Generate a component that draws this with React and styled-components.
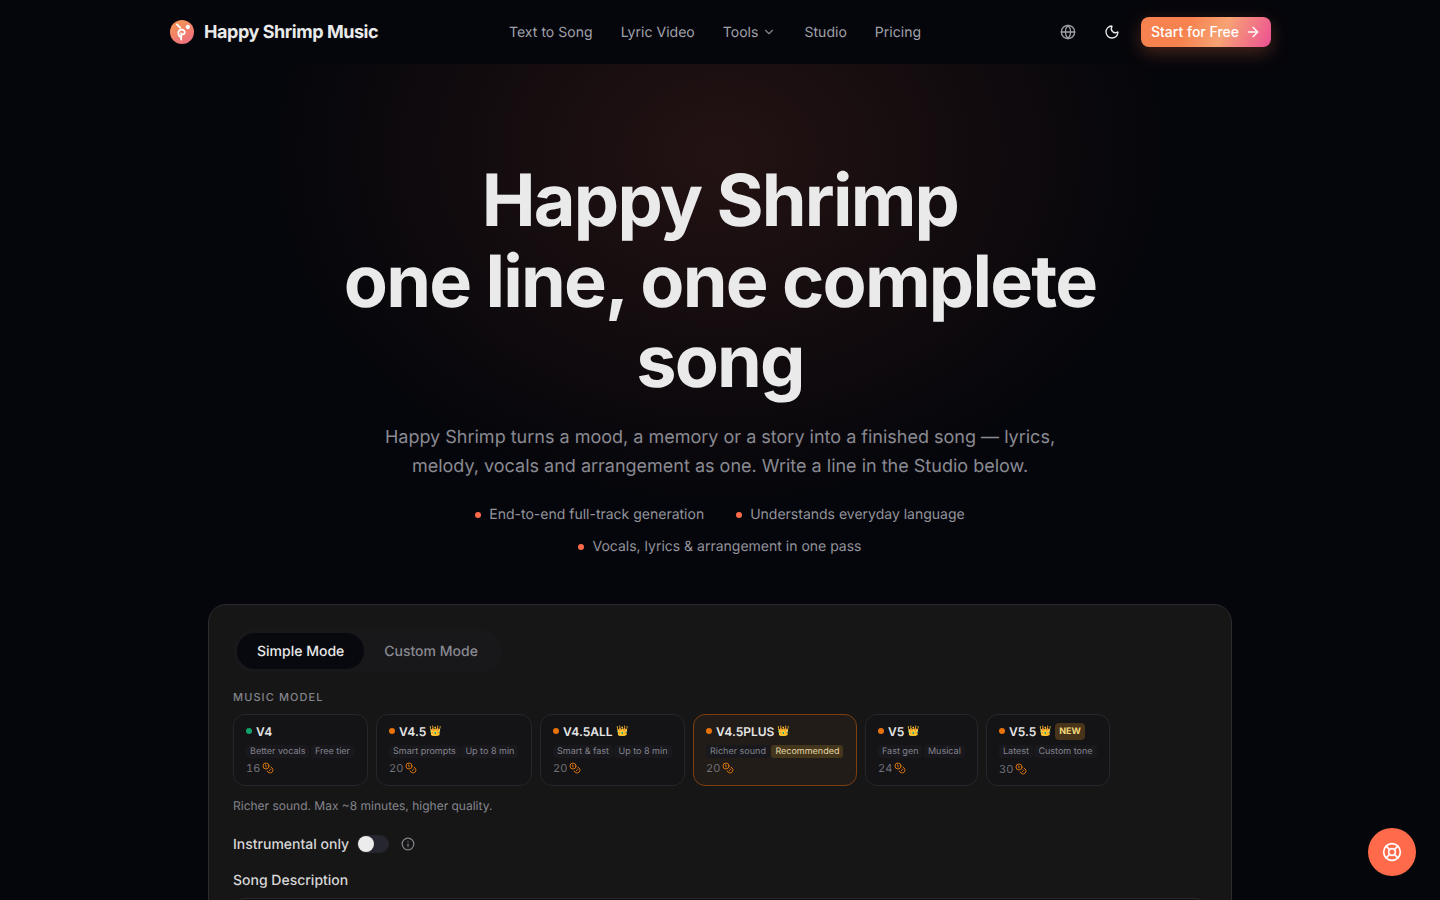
import React from 'react';
import styled, { createGlobalStyle } from 'styled-components';
import { ChevronDown, Globe, Moon, ArrowRight, Info, LifeBuoy, Coins } from 'lucide-react';

const models = [
  { name: 'V4', dot: '#10a36a', tags: ['Better vocals', 'Free tier'], credits: 16, width: 135 },
  { name: 'V4.5', crown: true, tags: ['Smart prompts', 'Up to 8 min'], credits: 20, width: 156 },
  { name: 'V4.5ALL', crown: true, tags: ['Smart & fast', 'Up to 8 min'], credits: 20, width: 145 },
  { name: 'V4.5PLUS', crown: true, tags: ['Richer sound', 'Recommended'], credits: 20, width: 164, active: true },
  { name: 'V5', crown: true, tags: ['Fast gen', 'Musical'], credits: 24, width: 113 },
  { name: 'V5.5', crown: true, isNew: true, tags: ['Latest', 'Custom tone'], credits: 30, width: 124 },
];

const LogoMark = () => (
  <LogoCircle>
    <svg width="20" height="20" viewBox="0 0 24 24" fill="none" stroke="#fff" strokeWidth="2.2" strokeLinecap="round">
      <path d="M6 3l4 4" />
      <path d="M10 18c-3-2-3.5-7 0-8.5 3-1.2 6 1 5.2 3.6-.6 2-3.6 2.4-4.4.6" />
      <path d="M11 16v5" />
      <circle cx="19" cy="6" r="1.5" fill="#fff" />
    </svg>
  </LogoCircle>
);

const App = () => {
  return (
    <Page>
      <GlobalStyle />
      <Header>
        <Brand>
          <LogoMark />
          <BrandName>Happy Shrimp Music</BrandName>
        </Brand>
        <Nav>
          <NavLink>Text to Song</NavLink>
          <NavLink>Lyric Video</NavLink>
          <NavLink>Tools <NavChevron size={14} /></NavLink>
          <NavLink>Studio</NavLink>
          <NavLink>Pricing</NavLink>
        </Nav>
        <Actions>
          <IconButton><Globe size={16} /></IconButton>
          <IconButton $light><Moon size={16} /></IconButton>
          <StartButton>Start for Free <ArrowRight size={16} /></StartButton>
        </Actions>
      </Header>

      <Hero>
        <Title>Happy Shrimp<br />one line, one complete song</Title>
        <Subtitle>
          Happy Shrimp turns a mood, a memory or a story into a finished song — lyrics, melody, vocals and arrangement as one. Write a line in the Studio below.
        </Subtitle>
        <Bullets>
          <Bullet>End-to-end full-track generation</Bullet>
          <Bullet>Understands everyday language</Bullet>
          <Bullet>Vocals, lyrics &amp; arrangement in one pass</Bullet>
        </Bullets>
      </Hero>

      <Studio>
        <Tabs>
          <Tab $active>Simple Mode</Tab>
          <Tab>Custom Mode</Tab>
        </Tabs>
        <SectionLabel>Music Model</SectionLabel>
        <ModelRow>
          {models.map((m) => (
            <ModelCard key={m.name} $active={m.active} $width={m.width}>
              <ModelHead>
                <Dot $color={m.dot} />
                <ModelName>{m.name}</ModelName>
                {m.crown && <CrownGlyph>👑</CrownGlyph>}
                {m.isNew && <NewBadge>NEW</NewBadge>}
              </ModelHead>
              <TagRow>
                {m.tags.map((t) => (
                  <Tag key={t} $gold={t === 'Recommended'}>{t}</Tag>
                ))}
              </TagRow>
              <Credits $low={m.isNew}>{m.credits} <Coins size={12} color="#d9730d" /></Credits>
            </ModelCard>
          ))}
        </ModelRow>
        <Hint>Richer sound. Max ~8 minutes, higher quality.</Hint>
        <ToggleRow>
          <ToggleLabel>Instrumental only</ToggleLabel>
          <Switch><Knob /></Switch>
          <InfoIcon><Info size={14} /></InfoIcon>
        </ToggleRow>
        <FieldLabel>Song Description</FieldLabel>
        <DescriptionBox />
      </Studio>

      <HelpButton><LifeBuoy size={20} /></HelpButton>
    </Page>
  );
};

const GlobalStyle = createGlobalStyle`
  html, body {
    margin: 0;
    height: 100%;
    overflow: hidden;
    background: #05060b;
  }
  * {
    box-sizing: border-box;
  }
`;

const Page = styled.div`
  height: 900px;
  overflow: hidden;
  font-family: Inter, "Liberation Sans", sans-serif;
  text-rendering: geometricPrecision;
  color: #eaeaea;
  background: #05060b;
`;

const Header = styled.header`
  height: 64px;
  width: 1101px;
  margin-left: 170px;
  display: flex;
  justify-content: space-between;
  align-items: center;
`;

const Brand = styled.div`
  display: flex;
  align-items: center;
  gap: 10px;
`;

const LogoCircle = styled.div`
  width: 24px;
  height: 24px;
  border-radius: 50%;
  display: flex;
  align-items: center;
  justify-content: center;
  background: linear-gradient(150deg, #f59a50, #ef6a84);
`;

const BrandName = styled.span`
  font-size: 18px;
  font-weight: 700;
  letter-spacing: -0.45px;
  color: #eaeaea;
`;

const Nav = styled.nav`
  display: flex;
  align-items: center;
  gap: 28px;
`;

const NavLink = styled.a`
  display: flex;
  align-items: center;
  gap: 4px;
  font-size: 14px;
  font-weight: 400;
  letter-spacing: 0.03px;
  color: #a1a1aa;
`;

const NavChevron = styled(ChevronDown)`
  color: #85858d;
`;

const Actions = styled.div`
  display: flex;
  align-items: center;
  gap: 12px;
`;

const IconButton = styled.button`
  width: 32px;
  height: 32px;
  padding: 0;
  background: none;
  border: none;
  display: flex;
  align-items: center;
  justify-content: center;
  color: ${(p) => (p.$light ? '#eaeaea' : '#a1a1aa')};
`;

const StartButton = styled.button`
  margin-left: 1px;
  width: 130px;
  height: 30px;
  padding: 0 0 1px;
  border: none;
  border-radius: 8px;
  display: flex;
  align-items: center;
  justify-content: center;
  gap: 6px;
  font-family: inherit;
  font-size: 14px;
  font-weight: 500;
  color: #fff;
  background: linear-gradient(115deg, #f6824f 0%, #f6824f 35%, #f7a274 62%, #ec4f94 100%);
  box-shadow: 0 6px 18px rgba(246, 120, 70, 0.28);
`;

const Hero = styled.section`
  height: 540px;
  padding-top: 97px;
  display: flex;
  flex-direction: column;
  align-items: center;
  text-align: center;
  background: radial-gradient(ellipse 450px 350px at 50% 90px, rgba(255, 107, 74, 0.12), rgba(255, 107, 74, 0) 100%);
`;

const Title = styled.h1`
  width: 896px;
  margin: 0;
  font-size: 72px;
  line-height: 80.7px;
  font-weight: 700;
  letter-spacing: -1.8px;
  color: #eaeaea;
`;

const Subtitle = styled.p`
  width: 700px;
  margin: 20px 0 0;
  font-size: 18px;
  line-height: 29px;
  color: #8a8a92;
`;

const Bullets = styled.ul`
  width: 560px;
  margin: 23px 0 0;
  padding: 0;
  list-style: none;
  display: flex;
  flex-wrap: wrap;
  justify-content: center;
  column-gap: 32px;
  row-gap: 11px;
`;

const Bullet = styled.li`
  display: flex;
  align-items: center;
  gap: 8px;
  font-size: 14px;
  line-height: 21px;
  color: #93939b;
  &::before {
    content: '';
    width: 6px;
    height: 6px;
    border-radius: 50%;
    background: #ff6b4a;
  }
`;

const Studio = styled.section`
  width: 1024px;
  height: 400px;
  margin: 0 auto;
  padding: 24px;
  border: 1px solid #2a2a30;
  border-radius: 18px;
  background: #161616;
`;

const Tabs = styled.div`
  display: inline-flex;
  padding: 4px;
  border-radius: 22px;
  background: #18181a;
`;

const Tab = styled.div`
  height: 36px;
  padding: 0 20px;
  display: flex;
  align-items: center;
  border-radius: 18px;
  font-size: 14px;
  font-weight: 500;
  color: ${(p) => (p.$active ? '#eaeaea' : '#8a8a92')};
  background: ${(p) => (p.$active ? '#08090e' : 'none')};
`;

const SectionLabel = styled.div`
  margin-top: 16px;
  height: 16px;
  font-size: 11px;
  line-height: 16px;
  font-weight: 500;
  letter-spacing: 1.1px;
  text-transform: uppercase;
  color: #85858d;
`;

const ModelRow = styled.div`
  display: flex;
  gap: 8px;
  margin-top: 9px;
`;

const ModelCard = styled.div`
  width: ${(p) => p.$width}px;
  height: 72px;
  padding: 9px 12px 0;
  border-radius: 12px;
  border: 1px solid ${(p) => (p.$active ? '#7d3f12' : '#26262c')};
  background: ${(p) => (p.$active ? '#211c17' : '#141416')};
`;

const ModelHead = styled.div`
  display: flex;
  align-items: center;
  gap: 4px;
  height: 14px;
`;

const Dot = styled.span`
  width: 6px;
  height: 6px;
  border-radius: 50%;
  background: ${(p) => p.$color || '#e8730c'};
`;

const ModelName = styled.span`
  font-size: 12px;
  font-weight: 600;
  color: #e6e6e6;
`;

const CrownGlyph = styled.span`
  margin-left: -0.5px;
  font-size: 10px;
  line-height: 14px;
`;

const NewBadge = styled.span`
  margin-left: -1px;
  padding: 3px 4px;
  border-radius: 4px;
  font-size: 9px;
  line-height: 11px;
  font-weight: 700;
  color: #f5d97a;
  background: #47341a;
`;

const TagRow = styled.div`
  display: flex;
  gap: 1.5px;
  margin-top: 7px;
`;

const Tag = styled.span`
  padding: 0 4px;
  height: 13px;
  border-radius: 3px;
  font-size: 9px;
  line-height: 13px;
  white-space: nowrap;
  color: ${(p) => (p.$gold ? '#e8d9a8' : '#85858d')};
  background: ${(p) => (p.$gold ? '#44361d' : '#18181d')};
`;

const Credits = styled.div`
  display: flex;
  align-items: center;
  gap: 2px;
  margin-top: ${(p) => (p.$low ? '4px' : '3px')};
  font-size: 11px;
  line-height: 14px;
  font-variant-numeric: tabular-nums;
  color: #71717a;
`;

const Hint = styled.p`
  margin: 12px 0 0;
  font-size: 12px;
  line-height: 16px;
  color: #85858d;
`;

const ToggleRow = styled.div`
  display: flex;
  align-items: center;
  margin: 19px 0 16px;
  height: 22px;
`;

const FieldLabel = styled.div`
  font-size: 14px;
  line-height: 20px;
  font-weight: 500;
  color: #d8d8d8;
`;

const ToggleLabel = styled(FieldLabel)`
  padding-top: 2px;
`;

const Switch = styled.div`
  width: 32px;
  height: 18px;
  margin-left: 8px;
  padding: 1px;
  border-radius: 9px;
  background: #26262e;
`;

const Knob = styled.div`
  width: 16px;
  height: 16px;
  border-radius: 50%;
  background: #ececec;
`;

const InfoIcon = styled.span`
  display: flex;
  margin-left: 12px;
  color: #85858d;
`;

const DescriptionBox = styled.div`
  height: 120px;
  margin-top: 7px;
  border: 1px solid #2a2a30;
  border-radius: 12px;
  background: #0c0c10;
`;

const HelpButton = styled.button`
  position: fixed;
  right: 24px;
  bottom: 24px;
  width: 48px;
  height: 48px;
  padding: 0;
  border: none;
  border-radius: 50%;
  display: flex;
  align-items: center;
  justify-content: center;
  color: #fff;
  background: #ff6b4a;
`;

export default App;
